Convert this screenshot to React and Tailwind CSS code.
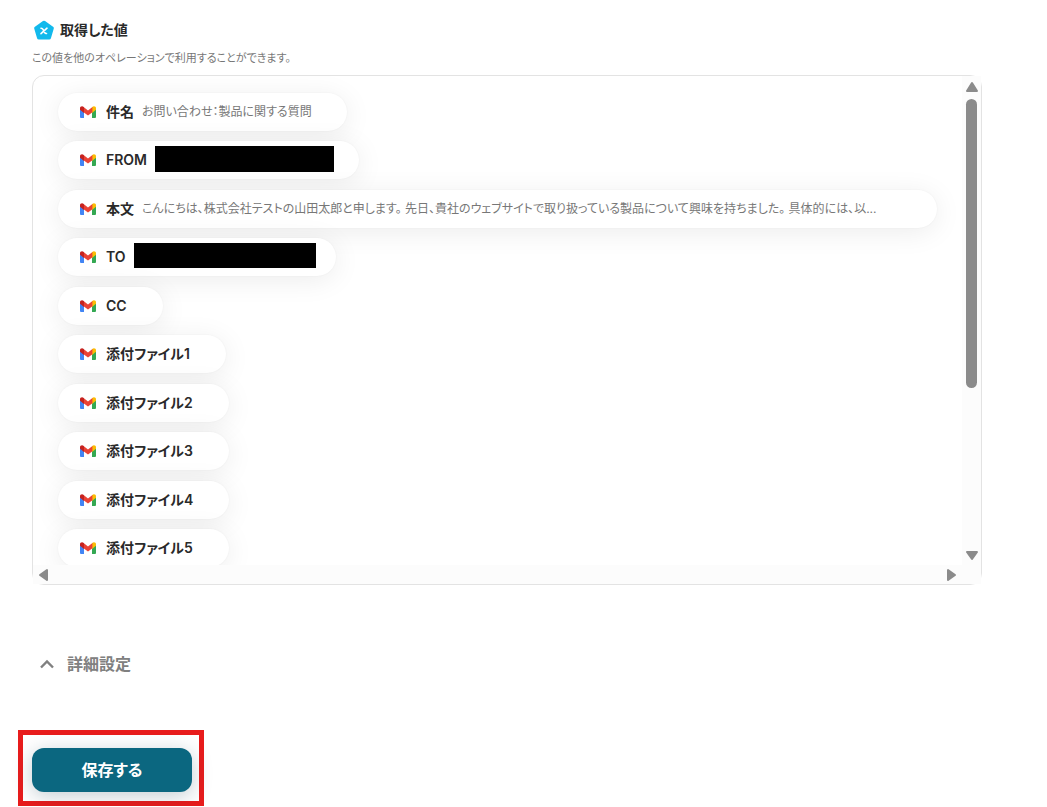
const FIELDS = [
  { label: "件名", value: "お問い合わせ：製品に関する質問", width: "min-w-[177px]" },
  { label: "FROM", masked: "h-[26px] w-[179px] -mt-[3px] mr-[-3px]" },
  {
    label: "本文",
    value:
      "こんにちは、株式会社テストの山田太郎と申します。 先日、貴社のウェブサイトで取り扱っている製品について興味を持ちました。 具体的には、以...",
    width: "min-w-[767px]",
  },
  { label: "TO", masked: "h-[25px] w-[182px] -mt-[3px] mr-[-8px]" },
  { label: "CC" },
  { label: "添付ファイル1" },
  { label: "添付ファイル2" },
  { label: "添付ファイル3" },
  { label: "添付ファイル4" },
  { label: "添付ファイル5" },
];

function GmailIcon() {
  return (
    <svg className="h-3 w-4 shrink-0" viewBox="0 0 16 12" aria-hidden="true">
      <path fill="#4285f4" d="M0 2.5 4 5v7H1a1 1 0 0 1-1-1Z" />
      <path fill="#34a853" d="M12 5l4-2.5V11a1 1 0 0 1-1 1h-3Z" />
      <path fill="#fbbc04" d="M12 1.2C13.6-.4 16 .3 16 2.2v1.6L12 7Z" />
      <path fill="#ea4335" d="M3.6 1 8 4.4 12.4 1v5.3L8 9.4 3.6 6.3Z" />
      <path fill="#c5221f" d="M0 2.2C0 .3 2.4-.4 4 1.2V7L0 3.8Z" />
    </svg>
  );
}

function ValueIcon() {
  return (
    <svg width="20" height="20" viewBox="0 0 20 20" aria-hidden="true">
      <path
        d="M10 2.5 18 8.2 15.2 17.7H4.8L2 8.2Z"
        fill="#12b9ec"
        stroke="#12b9ec"
        strokeWidth="3.6"
        strokeLinejoin="round"
      />
      <path
        d="M7 8.2c1-.1 1.5.3 2 1.2l1.6 3c.4.8.9 1.2 1.9 1.1M13 8.2 7 13.6"
        fill="none"
        stroke="#fff"
        strokeWidth="1.6"
        strokeLinecap="round"
      />
    </svg>
  );
}

function ChevronIcon() {
  return (
    <svg width="19" height="18" viewBox="0 0 19 18" aria-hidden="true">
      <path d="M3 12.5 9 6.5l6 6" fill="none" stroke="currentColor" strokeWidth="2.4" />
    </svg>
  );
}

function ScrollArrow({ label, points, className }) {
  return (
    <button type="button" aria-label={label} className={className}>
      <svg width="14" height="14" viewBox="0 0 14 14">
        <polygon
          points={points}
          fill="#8b8b8b"
          stroke="#8b8b8b"
          strokeWidth="2"
          strokeLinejoin="round"
        />
      </svg>
    </button>
  );
}

function FieldPill({ label, value, width, masked }) {
  return (
    <li className="flex h-[38px] items-center whitespace-nowrap rounded-full bg-white pl-[22px] pr-7 shadow-[0_4px_28px_rgba(0,0,0,0.08),0_0_2px_rgba(0,0,0,0.05)]">
      <GmailIcon />
      <span className="ml-2.5 mr-2 text-sm font-semibold text-[#2a2a2a]">{label}</span>
      {value && <span className={`text-xs text-[#777] ${width}`}>{value}</span>}
      {masked && <span className={`bg-black ${masked}`} />}
    </li>
  );
}

export default function App() {
  return (
    <main className="bg-white pl-8 pr-[65px] pt-5 font-['Inter','Noto_Sans_CJK_JP',sans-serif] [font-feature-settings:'palt']">
      <section>
        <h2 className="flex h-5 items-center gap-1.5 text-sm font-semibold text-[#2a2a2a]">
          <span className="ml-0.5">
            <ValueIcon />
          </span>
          取得した値
        </h2>
        <p className="mt-2.5 text-[11px] leading-4 text-[#777]">
          この値を他のオペレーションで利用することができます。
        </p>

        <div className="mt-[9px] grid h-[510px] grid-cols-[minmax(0,1fr)_19px] grid-rows-[minmax(0,1fr)_19px] rounded-xl border border-[#e3e3e3]">
          <div className="overflow-hidden rounded-tl-xl">
            <ul className="flex h-[491px] flex-col items-start justify-between pl-[25px] pt-[17px]">
              {FIELDS.map((field) => (
                <FieldPill key={field.label} {...field} />
              ))}
            </ul>
          </div>

          {/* Vertical scrollbar */}
          <div className="flex flex-col items-center bg-[#fcfcfc] pt-1 pb-[3px]">
            <ScrollArrow label="上へスクロール" points="7,3 12,11 2,11" />
            <div className="mt-[5px] h-[289px] w-[11px] rounded-full bg-[#8b8b8b]" />
            <ScrollArrow label="下へスクロール" points="7,11 12,4 2,4" className="mt-auto" />
          </div>

          {/* Horizontal scrollbar */}
          <div className="flex items-center justify-between bg-[#fcfcfc] px-[3px]">
            <ScrollArrow label="左へスクロール" points="4,7 11,2 11,12" />
            <ScrollArrow label="右へスクロール" points="10,7 3,2 3,12" />
          </div>
          <div className="bg-[#fcfcfc]" />
        </div>
      </section>

      <button
        type="button"
        className="mt-[67px] flex h-6 items-center gap-2.5 pl-1.5 text-base font-semibold text-[#808080]"
      >
        <ChevronIcon />
        詳細設定
      </button>

      <div className="-ml-[14px] mt-[54px] w-fit border-[5px] border-[#e81c1c] pt-[13px] pr-[7px] pb-[9px] pl-[9px]">
        <button
          type="button"
          className="h-11 w-40 rounded-xl bg-[#0b6780] text-base font-bold text-white shadow-[0_4px_20px_rgba(20,60,80,0.25)]"
        >
          保存する
        </button>
      </div>
    </main>
  );
}
